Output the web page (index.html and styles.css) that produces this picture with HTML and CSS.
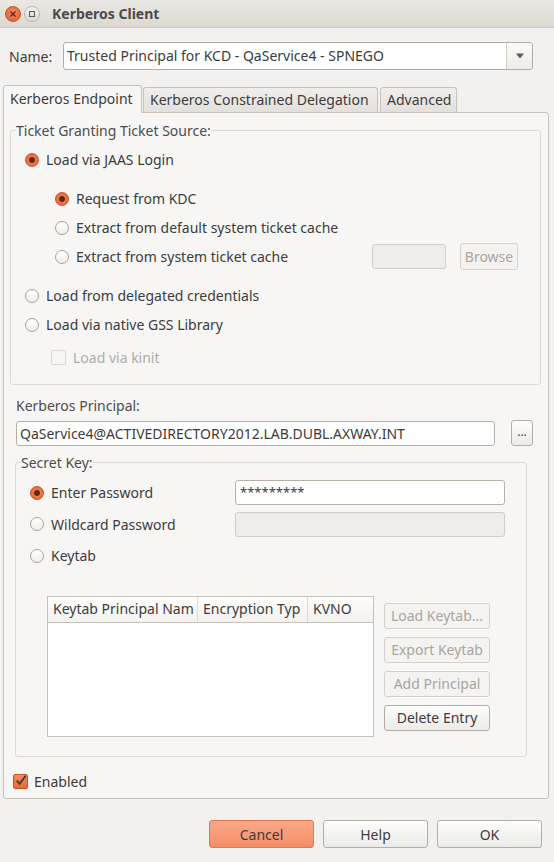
FILE: index.html
```html
<!DOCTYPE html>
<html>
<head>
<meta charset="utf-8">
<link rel="stylesheet" href="styles.css">
</head>
<body>
<div class="window">
  <div class="titlebar">
    <span class="wbtn close"><svg width="14" height="14" viewBox="0 0 14 14"><path d="M4.5 4.5 L9.5 9.5 M9.5 4.5 L4.5 9.5" stroke="#4a2a1c" stroke-width="1.2"/></svg></span>
    <span class="wbtn max"><svg width="14" height="14" viewBox="0 0 14 14"><rect x="4.5" y="4.5" width="5" height="5" fill="none" stroke="#5a5a5a" stroke-width="1"/></svg></span>
    <span class="wtitle">Kerberos Client</span>
  </div>

  <div class="namerow">
    <span class="lbl">Name:</span>
    <div class="combo">
      <span class="combo-text">Trusted Principal for KCD - QaService4 - SPNEGO</span>
      <span class="combo-btn"><svg width="10" height="6" viewBox="0 0 10 6"><path d="M1 0.5 L9 0.5 L5 5.5 Z" fill="#5b5b5b"/></svg></span>
    </div>
  </div>

  <div class="tabs">
    <div class="tab active t1">Kerberos Endpoint</div>
    <div class="tab t2">Kerberos Constrained Delegation</div>
    <div class="tab t3">Advanced</div>
  </div>

  <div class="panel">
    <fieldset class="group tgt">
      <legend>Ticket Granting Ticket Source:</legend>
      <div class="opt"><span class="radio on"></span>Load via JAAS Login</div>
      <div class="sub">
        <div class="opt"><span class="radio on"></span>Request from KDC</div>
        <div class="opt"><span class="radio"></span>Extract from default system ticket cache</div>
        <div class="opt cacherow"><span class="radio"></span><span class="grow">Extract from system ticket cache</span><span class="field dis small"></span><span class="btn dis browse">Browse</span></div>
      </div>
      <div class="opt"><span class="radio"></span>Load from delegated credentials</div>
      <div class="opt"><span class="radio"></span>Load via native GSS Library</div>
      <div class="opt kinit dis-text"><span class="check dis"></span>Load via kinit</div>
    </fieldset>

    <div class="below">
      <div class="plabel">Kerberos Principal:</div>
      <div class="prow">
        <div class="field principal">QaService4@ACTIVEDIRECTORY2012.LAB.DUBL.AXWAY.INT</div>
        <span class="btn dots">...</span>
      </div>

      <fieldset class="group secret">
        <legend>Secret Key:</legend>
        <div class="skrow"><div class="opt sk"><span class="radio on"></span>Enter Password</div><div class="field pw">*********</div></div>
        <div class="skrow"><div class="opt sk"><span class="radio"></span>Wildcard Password</div><div class="field pw dis"></div></div>
        <div class="skrow"><div class="opt sk"><span class="radio"></span>Keytab</div></div>
        <div class="keytab">
          <div class="table">
            <div class="thead">
              <span class="th c1">Keytab Principal Nam</span>
              <span class="th c2">Encryption Typ</span>
              <span class="th c3">KVNO</span>
            </div>
          </div>
          <div class="kbtns">
            <span class="btn dis">Load Keytab...</span>
            <span class="btn dis">Export Keytab</span>
            <span class="btn dis">Add Principal</span>
            <span class="btn">Delete Entry</span>
          </div>
        </div>
      </fieldset>
    </div>

    <div class="opt enabled"><span class="check on"><svg width="14" height="14" viewBox="0 0 14 14"><path d="M3 6.5 L6 10 L12.5 1.5" fill="none" stroke="#3c3c3c" stroke-width="2"/></svg></span>Enabled</div>
  </div>

  <div class="footer">
    <span class="btn big cancel">Cancel</span>
    <span class="btn big">Help</span>
    <span class="btn big">OK</span>
  </div>
</div>
</body>
</html>
```

FILE: styles.css
```css
* { box-sizing: border-box; }
html, body { margin: 0; padding: 0; }
body {
  width: 554px; height: 862px; overflow: hidden;
  background: #f2f1f0;
  font-family: "Noto Sans", "DejaVu Sans", sans-serif;
  font-size: 14px;
  color: #3c3c3c;
}
.window { width: 554px; height: 862px; }

.titlebar {
  height: 28px;
  background: linear-gradient(#ebe9e5, #dcd8d1);
  display: flex; align-items: center;
  padding-left: 5px;
  border-bottom: 1px solid #d0ccc5;
}
.wbtn {
  width: 16px; height: 16px; border-radius: 50%;
  display: inline-flex; align-items: center; justify-content: center;
  margin-right: 3px;
}
.wbtn.close { background: radial-gradient(circle at 50% 40%, #f58a5f, #e0582a); border: 1px solid #c7522a; }
.wbtn.max { background: linear-gradient(#f6f5f3, #dcd9d4); border: 1px solid #b9b4ad; }
.wtitle { font-weight: bold; font-size: 14px; color: #4b4b4b; margin-left: 9px; }

.namerow {
  display: flex; align-items: center;
  padding: 14px 21px 0 9px;
}
.lbl { width: 54px; }
.combo {
  flex: 1; height: 28px;
  display: flex; background: #fff;
  border: 1px solid #b5ada3; border-radius: 3px;
}
.combo-text { flex: 1; padding: 3px 3px; line-height: 20px; }
.combo-btn {
  width: 26px; border-left: 1px solid #d4cec6;
  background: linear-gradient(#fbfbfa, #eeece9);
  display: flex; align-items: center; justify-content: center;
  border-radius: 0 3px 3px 0;
}

.tabs { display: flex; align-items: flex-end; padding-left: 3px; margin-top: 15px; height: 27px; }
.tab {
  height: 25px; padding: 2px 0 0 6px;
  border: 1px solid #c8c1b8; border-bottom: none;
  border-radius: 3px 3px 0 0;
  background: linear-gradient(#f0efed, #e3e0dc);
  margin-right: 1px;
  white-space: nowrap;
}
.t1 { width: 139px; }
.t2 { width: 235px; margin-right: 2px; }
.t3 { width: 77px; }
.tab.active { height: 28px; background: #f7f6f5; position: relative; top: 1px; padding-top: 3px; }

.panel {
  margin: 0 5px 0 3px;
  height: 687px;
  background: #f7f6f5;
  border: 1px solid #c8c1b8; border-radius: 0 3px 3px 3px;
  padding: 8px 7px 0 6px;
}
fieldset.group {
  margin: 0; border: 1px solid #ddd8d2; border-radius: 3px;
  padding: 0; min-width: 0;
}
legend { padding: 0; margin-left: -9px; color: #4c4c4c; }
fieldset.tgt { height: 264px; padding: 5px 0 0 14px; }
.opt { display: flex; align-items: center; height: 29px; white-space: nowrap; }
.radio {
  width: 14px; height: 14px; border-radius: 50%;
  border: 1px solid #a8a29b; background: linear-gradient(#fff, #f0eeeb);
  margin-right: 7px; flex: none;
}
.radio.on { border-color: #c9532a; background: radial-gradient(circle, #5a2a18 0 2.5px, #f07a48 3.5px, #e4622f 7px); }
.sub { padding: 10px 0 10px 30px; }
.cacherow .grow { flex: 1; }
.field { background: #fff; border: 1px solid #b9b1a7; border-radius: 3px; }
.field.dis { background: #efedeb; border-color: #d3cdc6; }
.field.small { width: 74px; height: 25px; margin-right: 14px; }
.btn {
  display: inline-flex; align-items: center; justify-content: center;
  border: 1px solid #b5aea5; border-radius: 3px;
  background: linear-gradient(#fdfdfc, #ecebe9);
  color: #3c3c3c; white-space: nowrap;
}
.btn.dis { color: #a9a59f; border-color: #d6d0c9; background: #f4f3f1; }
.browse { width: 58px; height: 27px; margin-right: 22px; }
.opt.kinit { padding-left: 26px; margin-top: 4px; }
.dis-text { color: #b0aca6; }
.check {
  width: 15px; height: 15px; border: 1px solid #b3ada6; border-radius: 2px;
  margin-right: 6px; background: #fff; flex: none;
  display: inline-flex; align-items: center; justify-content: center;
}
.check.dis { border-color: #dcd7d1; background: #f7f6f5; margin-right: 7px; }
.check.on { background: linear-gradient(#f48b5e, #e7673a); border-color: #c45326; }

.below { padding-left: 6px; }
.plabel { margin-top: 11px; height: 20px; color: #4c4c4c; }
.prow { display: flex; align-items: center; margin-top: 4px; }
.principal { width: 479px; height: 25px; padding: 2px 3px; line-height: 19px; }
.dots { width: 22px; height: 26px; margin-left: 16px; font-size: 12px; padding-bottom: 4px; }

fieldset.secret { margin: 7px 0 0 -1px; width: 512px; height: 304px; padding: 5px 0 0 14px; }
.skrow { display: flex; align-items: center; height: 31.5px; }
.opt.sk { width: 205px; height: 31px; }
.pw { width: 270px; height: 25px; padding: 2px 4px; font-size: 13px; line-height: 19px; }

.keytab { display: flex; margin-top: 24px; margin-left: 17px; }
.table { width: 327px; height: 141px; background: #fff; border: 1px solid #c7c0b8; flex: none; }
.thead { display: flex; height: 26px; border-bottom: 1px solid #c7c0b8; background: linear-gradient(#fdfdfc, #f3f2f0); }
.th { padding: 2px 5px; white-space: nowrap; overflow: hidden; border-right: 1px solid #ddd8d2; line-height: 20px; flex: none; }
.c1 { width: 150px; }
.c2 { width: 110px; }
.c3 { width: 65px; border-right: none; }
.kbtns { display: flex; flex-direction: column; gap: 8px; margin-left: 10px; margin-top: 7px; }
.kbtns .btn { width: 106px; height: 26px; }

.opt.enabled { height: 28px; margin-top: 10px; padding-left: 3px; }

.footer { display: flex; justify-content: flex-end; gap: 9px; padding: 21px 12px 0 0; }
.btn.big { width: 105px; height: 28px; }
.btn.cancel { background: linear-gradient(#fba888, #f48e66); border-color: #e2784f; }
```
